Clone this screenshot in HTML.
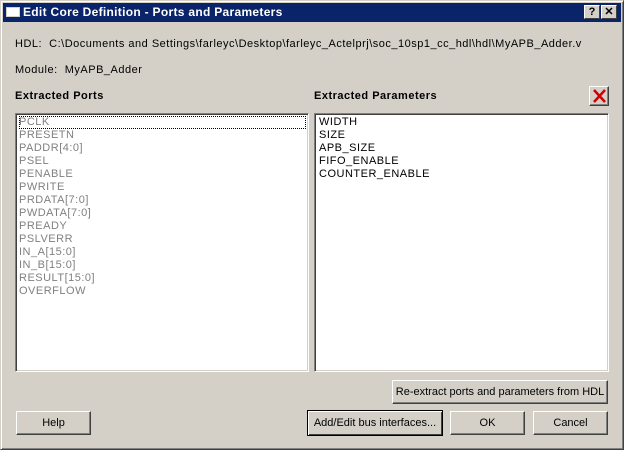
<!DOCTYPE html>
<html><head><style>
body{margin:0;width:624px;height:450px;background:#d4d0c8;font-family:"Liberation Sans",sans-serif;font-size:11px;letter-spacing:0.5px;color:#000;position:relative;overflow:hidden}
.a{position:absolute;white-space:nowrap}
.win{left:0;top:0;width:622px;height:448px;border:1px solid;border-color:#d4d0c8 #404040 #404040 #d4d0c8;box-shadow:inset 1px 1px #fff,inset -1px -1px #808080}
.title{left:3px;top:3px;width:618px;height:19px;background:#0a246a;color:#fff;font-weight:bold;font-size:12px;line-height:19px;letter-spacing:0.3px}
.tb{top:5px;width:14px;height:12px;background:#d4d0c8;border:1px solid;border-color:#fff #404040 #404040 #fff;color:#000;font-size:11px;line-height:12px;text-align:center;font-weight:bold;letter-spacing:0}
.box{background:#fff;border:1px solid;border-color:#808080 #fff #fff #808080;box-shadow:inset 1px 1px #404040,inset -1px -1px #d4d0c8}
.btn{background:#d4d0c8;border:1px solid;border-color:#fff #404040 #404040 #fff;box-shadow:inset -1px -1px #808080;text-align:center;box-sizing:border-box;letter-spacing:0}
</style></head><body>
<div class="a win"></div>
<div class="a title"><span class="a" style="left:3px;top:4px;width:14px;height:10px;background:#fff;border:1px solid #d4d0c8;box-sizing:border-box"></span><span class="a" style="left:20px;top:0">Edit Core Definition - Ports and Parameters</span></div>
<div class="a tb" style="left:584px">?</div>
<div class="a tb" style="left:601px">✕</div>
<div class="a" style="left:15px;top:38px">HDL:&nbsp; C:\Documents and Settings\farleyc\Desktop\farleyc_Actelprj\soc_10sp1_cc_hdl\hdl\MyAPB_Adder.v</div>
<div class="a" style="left:15px;top:64px">Module:&nbsp; MyAPB_Adder</div>
<div class="a" style="left:15px;top:90px;font-weight:bold">Extracted Ports</div>
<div class="a" style="left:314px;top:90px;font-weight:bold">Extracted Parameters</div>
<div class="a btn" style="left:589px;top:86px;width:20px;height:20px"><svg width="16" height="16" style="position:absolute;left:1px;top:1px"><path d="M3 2L14 14M14 2L3 14" stroke="#d00000" stroke-width="2.5"/></svg></div>
<div class="a box" style="left:15px;top:113px;width:292px;height:257px;color:#808080">
<div class="a" style="left:3px;top:2px;width:285px;height:11px;border:1px dotted #000"></div>
<div class="a" style="left:3px;top:2px;line-height:13px">PCLK<br>PRESETN<br>PADDR[4:0]<br>PSEL<br>PENABLE<br>PWRITE<br>PRDATA[7:0]<br>PWDATA[7:0]<br>PREADY<br>PSLVERR<br>IN_A[15:0]<br>IN_B[15:0]<br>RESULT[15:0]<br>OVERFLOW</div></div>
<div class="a box" style="left:314px;top:113px;width:293px;height:257px">
<div class="a" style="left:4px;top:2px;line-height:13px">WIDTH<br>SIZE<br>APB_SIZE<br>FIFO_ENABLE<br>COUNTER_ENABLE</div></div>
<div class="a btn" style="left:392px;top:380px;width:216px;height:24px;line-height:22px">Re-extract ports and parameters from HDL</div>
<div class="a btn" style="left:16px;top:411px;width:75px;height:24px;line-height:22px">Help</div>
<div class="a btn" style="left:307px;top:410px;width:136px;height:26px;line-height:24px;border:1px solid #000;box-shadow:inset 1px 1px #fff,inset -1px -1px #404040">Add/Edit bus interfaces...</div>
<div class="a btn" style="left:450px;top:411px;width:75px;height:24px;line-height:22px">OK</div>
<div class="a btn" style="left:533px;top:411px;width:75px;height:24px;line-height:22px">Cancel</div>
</body></html>
